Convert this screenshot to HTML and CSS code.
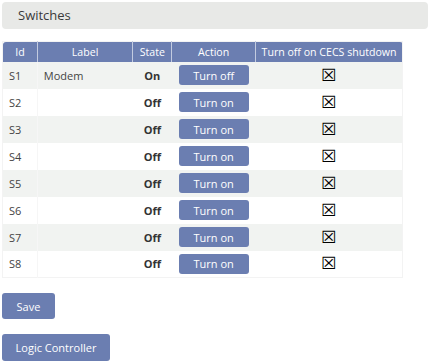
FILE: index.html
```html
<!DOCTYPE html>
<html lang="en">
<head>
  <meta charset="UTF-8" />
  <title>Switches</title>
  <link rel="stylesheet" href="styles.css">
</head>
<body>

<div class="panel-title">Switches</div>

<table class="switches">
  <thead>
    <tr>
      <th class="c-id">Id</th>
      <th class="c-label">Label</th>
      <th class="c-state">State</th>
      <th class="c-action">Action</th>
      <th class="c-cecs">Turn off on CECS shutdown</th>
    </tr>
  </thead>
  <tbody>
    <tr><td>S1</td><td>Modem</td><td class="state">On</td><td class="action"><button class="btn btn-row">Turn off</button></td><td class="cecs">☒</td></tr>
    <tr><td>S2</td><td></td><td class="state">Off</td><td class="action"><button class="btn btn-row">Turn on</button></td><td class="cecs">☒</td></tr>
    <tr><td>S3</td><td></td><td class="state">Off</td><td class="action"><button class="btn btn-row">Turn on</button></td><td class="cecs">☒</td></tr>
    <tr><td>S4</td><td></td><td class="state">Off</td><td class="action"><button class="btn btn-row">Turn on</button></td><td class="cecs">☒</td></tr>
    <tr><td>S5</td><td></td><td class="state">Off</td><td class="action"><button class="btn btn-row">Turn on</button></td><td class="cecs">☒</td></tr>
    <tr><td>S6</td><td></td><td class="state">Off</td><td class="action"><button class="btn btn-row">Turn on</button></td><td class="cecs">☒</td></tr>
    <tr><td>S7</td><td></td><td class="state">Off</td><td class="action"><button class="btn btn-row">Turn on</button></td><td class="cecs">☒</td></tr>
    <tr><td>S8</td><td></td><td class="state">Off</td><td class="action"><button class="btn btn-row">Turn on</button></td><td class="cecs">☒</td></tr>
  </tbody>
</table>

<div class="actions">
  <button class="btn btn-save">Save</button>
  <button class="btn btn-logic">Logic Controller</button>
</div>

</body>
</html>
```

FILE: styles.css
```css
* { box-sizing: border-box; }

body {
  margin: 2px;
  font-family: 'Open Sans', 'Noto Sans', sans-serif;
  font-size: 11px;
  color: #444;
  background: #fff;
}

.panel-title {
  height: 27px;
  line-height: 27px;
  padding-left: 16px;
  background: #e8e9e7;
  border-radius: 4px;
  font-size: 13px;
  color: #3a3a3a;
}

.switches {
  margin-top: 12px;
  width: 401px;
  border-collapse: collapse;
  border: 1px solid #f3f3f3;
}

.switches th {
  height: 20px;
  padding: 0;
  background: #6b7eb1;
  color: #fff;
  font-size: 10.6px;
  font-weight: normal;
  text-align: center;
  border-left: 1px solid #c3cbe0;
  white-space: nowrap;
}

.switches th:first-child { border-left: none; border-top-left-radius: 3px; }
.switches th:last-child { border-top-right-radius: 3px; }

.c-id { width: 35px; }
.c-label { width: 96px; }
.c-state { width: 39px; }
.c-action { width: 84px; }
.c-cecs { width: 147px; }

.switches td {
  height: 27px;
  padding: 0 0 0 6px;
  vertical-align: middle;
}

.switches td:first-child { border-right: 1px solid #f6f6f6; }

.switches tbody tr:nth-child(odd) { background: #f1f3f1; }
.switches tbody tr:nth-child(even) { background: #fff; }

.switches td.state {
  padding: 0;
  text-align: center;
  font-weight: bold;
  color: #333;
}

.switches td.action {
  padding: 0;
  text-align: center;
}

.switches td.cecs {
  padding: 0;
  text-align: center;
  font-family: 'DejaVu Sans', sans-serif;
  font-size: 17px;
  line-height: 1;
  color: #000;
}

.btn {
  display: block;
  border: none;
  border-radius: 3px;
  background: #6b7eb1;
  color: #fff;
  font-family: 'Open Sans', 'Noto Sans', sans-serif;
  font-size: 11px;
  padding: 0;
  cursor: pointer;
}

.btn-row {
  margin: 0 auto;
  width: 70px;
  height: 20px;
}

.actions {
  margin-top: 15px;
  display: flex;
  flex-direction: column;
  align-items: flex-start;
  gap: 15px;
}

.btn-save {
  width: 53px;
  height: 26px;
}

.btn-logic {
  width: 108px;
  height: 27px;
}
```
